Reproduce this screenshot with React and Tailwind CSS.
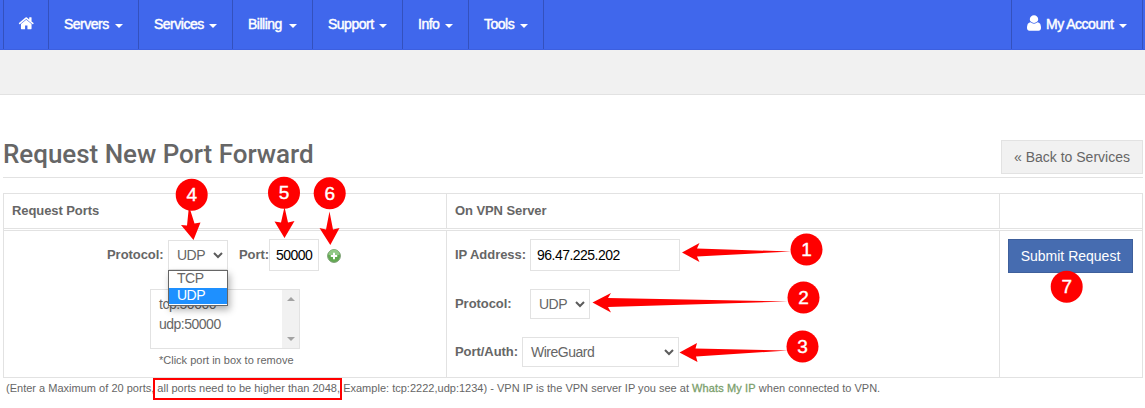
import React from "react";

function Caret() {
  return (
    <svg width="8" height="4" viewBox="0 0 8 4" className="mt-[3px] shrink-0" fill="#fff">
      <path d="M0 0h8L4 4z" />
    </svg>
  );
}

function HomeIcon() {
  return (
    <svg width="16.5" height="16.5" viewBox="0 0 1792 1792" fill="#fff">
      <path d="M1472 992v480q0 26-19 45t-45 19h-384v-384h-256v384h-384q-26 0-45-19t-19-45v-480q0-1 .5-3t.5-3l575-474 575 474q1 2 1 6zm223-69l-62 74q-8 9-21 11h-3q-13 0-21-7l-692-577-692 577q-12 8-24 7-13-2-21-11l-62-74q-8-10-7-23.5t11-21.5l719-599q32-26 76-26t76 26l244 204v-195q0-14 9-23t23-9h192q14 0 23 9t9 23v408l219 182q10 8 11 21.5t-7 23.5z" />
    </svg>
  );
}

function UserIcon() {
  return (
    <svg width="14" height="18" viewBox="0 0 1280 1792" preserveAspectRatio="none" className="mb-[3px] mr-[5px] shrink-0" fill="#fff">
      <path d="M1280 1399q0 109-62.5 187t-150.5 78h-854q-88 0-150.5-78t-62.5-187q0-85 8.5-160.5t31.5-152 58.5-131 94-89 134.5-34.5q131 128 313 128t313-128q76 0 134.5 34.5t94 89 58.5 131 31.5 152 8.5 160.5zm-256-887q0 159-112.5 271.5t-271.5 112.5-271.5-112.5-112.5-271.5 112.5-271.5 271.5-112.5 271.5 112.5 112.5 271.5z" />
    </svg>
  );
}

function NavItem({ label, className }) {
  return (
    <div className={`flex h-full items-center justify-between border-r border-[#3451bd] px-[15px] ${className}`}>
      <span className="whitespace-nowrap">{label}</span>
      <Caret />
    </div>
  );
}

function Label({ children, className }) {
  return (
    <span className={`whitespace-nowrap text-[13px] font-bold tracking-[-0.05px] ${className}`}>{children}</span>
  );
}

function Chevron() {
  return (
    <svg width="10" height="7" viewBox="0 0 10 7" className="shrink-0" fill="none" stroke="#5c5c5c" strokeWidth="2">
      <path d="M1 1l4 4 4-4" />
    </svg>
  );
}

function Select({ value, className }) {
  return (
    <div className={`flex h-[30px] shrink-0 items-center justify-between border border-[#e2e2e2] bg-white pl-2 pr-1 text-[14px] tracking-[-0.5px] text-[#666] ${className}`}>
      <span>{value}</span>
      <Chevron />
    </div>
  );
}

const marks = [
  { n: 1, x: 806.5, y: 249.5, arrow: "682,252.5 699.5,243 697,248.5 791,251.5 697,256.5 699.5,262" },
  { n: 2, x: 803.5, y: 297.5, arrow: "592.5,302.5 611,293 608,298 788,301.5 608,307 611,312.5" },
  { n: 3, x: 802.5, y: 346.5, arrow: "679.5,352.5 697,343 695.5,348.5 788,350.5 696,356.5 697.5,362" },
  { n: 4, x: 191.7, y: 194.7, arrow: "193.5,240 181,225 187,225.5 189,206 194.5,223.5 200.5,222.5" },
  { n: 5, x: 284, y: 192.7, arrow: "284.5,238 274.5,221.5 281,222.5 284.5,207 288,222.5 294.5,221" },
  { n: 6, x: 329.7, y: 193.3, arrow: "330.3,245 319.5,228 326,229.5 329.5,211.5 333,229.5 339.5,228" },
  { n: 7, x: 1066.7, y: 286.7 },
];

function Annotations() {
  return (
    <svg className="pointer-events-none absolute left-0 top-0" width="1145" height="408" viewBox="0 0 1145 408">
      {marks.map((m) => (
        <g key={m.n}>
          {m.arrow && <polygon points={m.arrow} fill="#f00" />}
          <circle cx={m.x} cy={m.y} r="16" fill="#f00" />
          <text x={m.x} y={m.y + 6.3} textAnchor="middle" fontSize="19" fill="#fff" stroke="#fff" strokeWidth="0.4">
            {m.n}
          </text>
        </g>
      ))}
      <rect x="154" y="379" width="187" height="20" fill="none" stroke="#f00" strokeWidth="2" />
    </svg>
  );
}

export default function App() {
  return (
    <div className="relative h-[408px] w-[1145px] overflow-hidden bg-white font-['Liberation_Sans',Arial,sans-serif] text-[#666]">
      <nav className="flex h-[50px] justify-between border-b border-[#3c5fe0] bg-[#4067ec] pl-[3px] pr-[2px] text-[14px] tracking-[-0.5px] text-white [-webkit-text-stroke:0.45px_#fff]">
        <div className="flex">
          <div className="flex w-[46px] items-center justify-center border-x border-[#3451bd] pb-[2px]">
            <HomeIcon />
          </div>
          <NavItem label="Servers" className="w-[90px]" />
          <NavItem label="Services" className="w-[94px]" />
          <NavItem label="Billing" className="w-[80px]" />
          <NavItem label="Support" className="w-[90px]" />
          <NavItem label="Info" className="w-[66px]" />
          <NavItem label="Tools" className="w-[75px]" />
        </div>
        <div className="flex w-[132px] items-center border-x border-[#3451bd] px-[15px]">
          <UserIcon />
          <span className="flex-1 whitespace-nowrap">My Account</span>
          <Caret />
        </div>
      </nav>
      <div className="h-[45px] border-b border-[#e2e2e2] bg-[#f1f1f1]" />

      <main className="ml-[3px] w-[1140px]">
        <header className="flex h-[83px] items-end justify-between border-b border-[#e2e2e2] pb-[3px]">
          <h1 className="mb-[4px] whitespace-nowrap font-[Roboto] text-[26px] font-medium leading-[32px] tracking-[-0.03px]">Request New Port Forward</h1>
          <a className="flex h-[34px] w-[142px] items-center justify-center whitespace-nowrap border border-[#e2e2e2] bg-[#f1f1f1] text-[14px]">« Back to Services</a>
        </header>

        <section className="mt-[15px] border border-[#e2e2e2]">
          <div className="grid h-[35px] grid-cols-[443px_553px_1fr] border-b border-[#e2e2e2] text-[13px] font-bold tracking-[-0.08px]">
            <div className="flex items-center border-r border-[#e2e2e2] pl-2">Request Ports</div>
            <div className="flex items-center border-r border-[#e2e2e2] pl-2">On VPN Server</div>
            <div />
          </div>
          <div className="mt-px grid h-[147px] grid-cols-[443px_553px_1fr] border-t border-[#e2e2e2]">
            <div className="border-r border-[#e2e2e2] pt-2">
              <div className="flex h-8 items-center pl-[103px]">
                <Label className="w-[61px]">Protocol:</Label>
                <div className="relative">
                  <Select value="UDP" className="w-[60px]" />
                  <div className="absolute left-0 top-[30px] z-10 w-[60px] border border-[#666] bg-white text-[14px] leading-[15px] tracking-[-0.5px] shadow-[2px_4px_7px_rgba(0,0,0,0.3)]">
                    <div className="h-[17px] pl-2">TCP</div>
                    <div className="h-[17px] border-b border-white bg-[#1e90ff] pl-2 text-white">UDP</div>
                  </div>
                </div>
                <Label className="ml-[11px] w-[30px]">Port:</Label>
                <div className="flex h-8 w-[50px] items-center border border-[#e2e2e2] pl-[6px] text-[14px] tracking-[-0.55px] text-black">50000</div>
                <svg width="14" height="14" viewBox="0 0 14 14" className="ml-2 mt-[2px]">
                  <circle cx="7" cy="7" r="6.4" fill="#62aa50" stroke="#7d9f76" />
                  <path d="M1.5 6a5.5 5.5 0 0 1 11 0z" fill="#92c986" />
                  <path d="M7 3.8v6.4M3.8 7h6.4" stroke="#fff" strokeWidth="2" />
                </svg>
              </div>
              <div className="ml-[146px] mt-[18px] flex h-[60px] w-[150px] justify-between border border-[#e2e2e2] text-[14px] leading-[20px] tracking-[-0.5px]">
                <div className="pl-2 pt-1">
                  <div>tcp:50000</div>
                  <div>udp:50000</div>
                </div>
                <div className="flex w-[17px] flex-col items-center justify-between bg-[#f1f1f1] py-[7px]">
                  <svg width="8" height="4" fill="#a3a3a3"><path d="M4 0l4 4H0z" /></svg>
                  <svg width="8" height="4" fill="#a3a3a3"><path d="M0 0h8L4 4z" /></svg>
                </div>
              </div>
              <p className="ml-[155px] mt-[3px] whitespace-nowrap text-[11px] leading-4">*Click port in box to remove</p>
            </div>
            <div className="border-r border-[#e2e2e2] pl-2 pt-2">
              <div className="flex h-8 items-center">
                <Label className="w-[75px]">IP Address:</Label>
                <div className="flex h-8 w-[150px] items-center border border-[#e2e2e2] pl-[6px] text-[14px] tracking-[-0.52px] text-black">96.47.225.202</div>
              </div>
              <div className="mt-[18px] flex h-[30px] items-center">
                <Label className="w-[75px]">Protocol:</Label>
                <Select value="UDP" className="w-[60px]" />
              </div>
              <div className="mt-[18px] flex h-[30px] items-center">
                <Label className="w-[67px]">Port/Auth:</Label>
                <Select value="WireGuard" className="w-[157px]" />
              </div>
            </div>
            <div className="pl-2 pt-2">
              <button className="flex h-[34px] w-[125px] items-center justify-center whitespace-nowrap border border-[#3e5f9b] bg-[#466cb0] text-[14px] text-white">Submit Request</button>
            </div>
          </div>
        </section>
        <p className="ml-[3px] mt-[2px] whitespace-nowrap text-[11px] leading-4 tracking-[0.012px]">
          (Enter a Maximum of 20 ports, all ports need to be higher than 2048, Example: tcp:2222,udp:1234) - VPN IP is the VPN server IP you see at <a className="text-[#7ba06c] tracking-[0.12px] [-webkit-text-stroke:0.3px_#7ba06c]">Whats My IP</a> when connected to VPN.
        </p>
      </main>
      <Annotations />
    </div>
  );
}
